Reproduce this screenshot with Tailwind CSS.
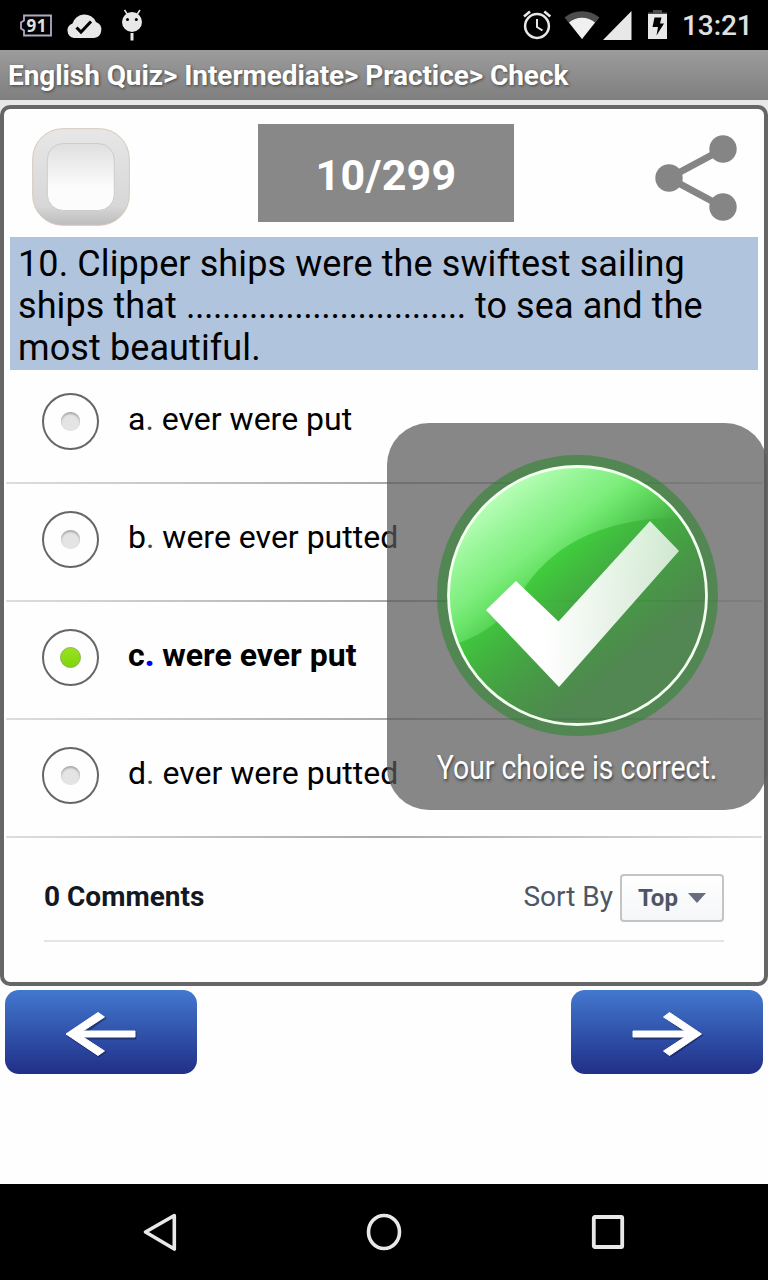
<!DOCTYPE html>
<html lang="en">
  <head>
    <meta charset="UTF-8" />
    <meta name="viewport" content="width=device-width, initial-scale=1.0" />
    <title>English Quiz</title>
    <script src="https://cdn.jsdelivr.net/npm/@tailwindcss/browser@4"></script>
  </head>
  <body class="font-['Roboto',sans-serif]">
    <div class="relative flex h-[1280px] w-[768px] flex-col overflow-hidden bg-[#fefefe]">
      <!-- Status bar -->
      <header class="flex h-[50px] shrink-0 items-center justify-between bg-black">
        <svg class="h-[50px] w-[160px]" viewBox="0 0 160 50">
          <path d="M24 15.500h27v20H24v-5l-3-2v-6l3-2z" fill="none" stroke="#b4a9c6" stroke-width="1.800" />
          <text x="26.500" y="31.800" font-size="17" font-weight="700" textLength="20" fill="#e0e0e0" font-family="Open Sans, sans-serif">91</text>
          <path d="M74 38a7.500 7.500 0 0 1-1.500-14.500a12.500 12.500 0 0 1 23.500-1.500a8.300 8.300 0 0 1-2 16z" fill="#e8e8e8" />
          <path d="M76.500 27.500l4.500 4.500l10-10.500" fill="none" stroke="#000" stroke-width="3" />
          <circle cx="132" cy="22" r="10" fill="#e8e8e8" />
          <path d="M124.500 10l3 4.500M140 10l-3 4.500" stroke="#e8e8e8" stroke-width="1.500" />
          <path d="M132 33v7.500" stroke="#e8e8e8" stroke-width="3" />
          <circle cx="127.500" cy="19.500" r="1.500" />
          <circle cx="136.300" cy="19.500" r="1.500" />
        </svg>
        <div class="flex items-center">
          <svg class="h-[50px] w-[168px]" viewBox="514 0 168 50">
            <g fill="none" stroke="#e8e8e8">
              <circle cx="537" cy="26" r="11.900" stroke-width="2.500" />
              <path d="M537 19v8l5.500 3.500" stroke-width="2" />
              <path d="M524 16.500l6-5M550.300 16.500l-6-5" stroke-width="2.600" />
            </g>
            <path d="M582 39L564.500 17.500a28 28 0 0 1 35 0z" fill="#4d4d4d" />
            <path d="M582 39L569 22.500a20 20 0 0 1 26 0z" fill="#f0f0f0" />
            <path d="M603 40H631.500V11z" fill="#e8e8e8" />
            <path d="M648 15V12.500h5V10h9v2.500h5V15z" fill="#4d4d4d" />
            <path d="M648 14h19v25h-19z" fill="#e8e8e8" />
            <path d="M654.500 17.500h7l-1.500 6h4l-7.500 12l1.500-8.500h-5.500z" fill="#000" />
          </svg>
          <span class="w-[86px] pt-0.5 text-[28px] leading-none font-medium tracking-[-0.1px] text-[#e0e0e0]">13:21</span>
        </div>
      </header>

      <h1 class="h-[50px] shrink-0 bg-linear-to-b from-[#9c9c9c] to-[#7f7f7f] pl-2 text-[28px] leading-[51px] font-bold tracking-[-0.08px] whitespace-nowrap text-white [text-shadow:1px_1px_3px_#444]">English Quiz&gt; Intermediate&gt; Practice&gt; Check</h1>

      <div class="shrink-0 bg-linear-to-b from-[#e7e7e7] to-[#fcfcfc] pt-[5px]">
        <main class="relative h-[881px] rounded-[10px] border-4 border-[#666] bg-[#fefefe]">
          <!-- Favourite toggle, counter, share -->
          <div class="flex h-32 items-start pt-[15px] pl-[28px]">
            <svg class="mt-[4px] h-[98px] w-[98px]" viewBox="0 0 98 98">
              <defs>
                <linearGradient id="frame" x2="0" y2="1"><stop stop-color="#e7e7e7" /><stop offset=".8" stop-color="#d7d7d7" /><stop offset="1" stop-color="#bcbcbc" /></linearGradient>
                <linearGradient id="well" x2="0" y2="1"><stop stop-color="#dfdfdf" /><stop offset=".65" stop-color="#fcfcfc" /></linearGradient>
              </defs>
              <rect x=".7" y=".7" width="96.600" height="96.600" rx="30" fill="url(#frame)" stroke="#d5c9b9" stroke-width="1" />
              <rect x="15.300" y="15.500" width="67" height="67" rx="16" fill="url(#well)" stroke="#ccc" stroke-width="1" />
            </svg>
            <div class="ml-32 h-[98px] w-64 bg-[#888] text-center text-[43px] leading-[102px] font-bold tracking-[0.3px] text-white">10/299</div>
            <svg class="ml-[138px] h-[98px] w-[92px]" viewBox="652 124 92 98">
              <path d="M723 149L669 178L723 207" fill="none" stroke="#858585" stroke-width="7" />
              <circle cx="723" cy="149" r="13.700" fill="#858585" />
              <circle cx="669" cy="178" r="13.700" fill="#858585" />
              <circle cx="723" cy="207" r="13.700" fill="#858585" />
            </svg>
          </div>

          <p class="mx-[6px] h-[133px] bg-[#b0c4de] pt-[6px] pl-2 text-[36px] leading-[42px] tracking-[0.1px] whitespace-nowrap text-black">10. Clipper ships were the swiftest sailing<br />ships that <span class="tracking-[-0.46px]">...............................</span> to sea and the<br />most beautiful.</p>

          <!-- Answers -->
          <ul class="-mt-1 mr-0.5 ml-0.5">
            <li class="h-[118px]">
              <div class="flex h-[116px] pt-[27px] pl-9">
                <div class="flex size-[57px] items-center justify-center rounded-full border-2 border-[#666]"><i class="size-[19px] rounded-[9px] bg-[#e4e4e4] shadow-[inset_0_2px_2px_#aaa]"></i></div>
                <span class="ml-[29px] text-[32px] leading-[52px] text-black">a<b class="font-normal text-[#444]">.</b> ever were put</span>
              </div>
              <div class="h-0.5 bg-linear-to-r from-[#ddd] via-[#aaa] to-[#ddd]"></div>
            </li>
            <li class="h-[118px]">
              <div class="flex h-[116px] pt-[27px] pl-9">
                <div class="flex size-[57px] items-center justify-center rounded-full border-2 border-[#666]"><i class="size-[19px] rounded-[9px] bg-[#e4e4e4] shadow-[inset_0_2px_2px_#aaa]"></i></div>
                <span class="ml-[29px] text-[32px] leading-[52px] text-black">b<b class="font-normal text-[#444]">.</b> were ever putted</span>
              </div>
              <div class="h-0.5 bg-linear-to-r from-[#ddd] via-[#aaa] to-[#ddd]"></div>
            </li>
            <li class="h-[118px]">
              <div class="flex h-[116px] pt-[27px] pl-9">
                <div class="flex size-[57px] items-center justify-center rounded-full border-2 border-[#666]"><i class="size-[21px] rounded-full border border-[#86b247] bg-linear-to-b from-[#9be11f] to-[#7fd60c]"></i></div>
                <span class="ml-[29px] text-[32px] leading-[52px] font-bold text-black">c<b class="text-[#00f]">.</b> were ever put</span>
              </div>
              <div class="h-0.5 bg-linear-to-r from-[#ddd] via-[#aaa] to-[#ddd]"></div>
            </li>
            <li class="h-[118px]">
              <div class="flex h-[116px] pt-[27px] pl-9">
                <div class="flex size-[57px] items-center justify-center rounded-full border-2 border-[#666]"><i class="size-[19px] rounded-[9px] bg-[#e4e4e4] shadow-[inset_0_2px_2px_#aaa]"></i></div>
                <span class="ml-[29px] text-[32px] leading-[52px] text-black">d<b class="font-normal text-[#444]">.</b> ever were putted</span>
              </div>
              <div class="h-0.5 bg-linear-to-r from-[#ddd] via-[#aaa] to-[#ddd]"></div>
            </li>
          </ul>

          <!-- Comments -->
          <div class="mx-10 mt-9 flex h-[68px] items-start border-b-2 border-[#e5e5e5] text-[28px]">
            <span class="leading-[46px] font-bold text-[#141823]">0 Comments</span>
            <span class="ml-auto leading-[46px] text-[#4e5665]">Sort By</span>
            <button class="ml-[7px] flex h-12 w-[104px] items-center rounded-[4px] border-2 border-[#c4c4c6] bg-linear-to-b from-white to-[#f5f6f8] pl-4 text-[24px] font-bold text-[#4e5665]">
              Top
              <svg class="ml-[10px] h-[10px] w-[18px]" viewBox="0 0 18 10"><path d="M0 0h18L9 10z" fill="#686d80" /></svg>
            </button>
          </div>
        </main>
      </div>

      <!-- Previous / next -->
      <div class="flex h-[198px] shrink-0 items-start justify-between px-[5px] pt-1">
        <button class="h-[84px] w-48 rounded-[14px] bg-linear-to-b from-[#4478cf] to-[#212f88]">
          <svg class="h-[84px] w-48" viewBox="0 0 192 84">
            <path d="M62 46L94 24L101 28L82 42H131V49H82L101 62L94 67L62 46z" fill="#182352" stroke="#182352" stroke-linejoin="round" opacity=".6" />
            <path d="M61 44L93 22.500L99.500 27L78 41H130V47H78L99.500 61L93 65.500z" fill="#fff" stroke="#fff" stroke-linejoin="round" />
          </svg>
        </button>
        <button class="h-[84px] w-48 rounded-[14px] bg-linear-to-b from-[#4478cf] to-[#212f88]">
          <svg class="h-[84px] w-48" viewBox="0 0 192 84">
            <path d="M132 45L100 24L94 28L113 42H63V49H113L94 63L100 67L132 45z" fill="#182352" stroke="#182352" stroke-linejoin="round" opacity=".6" />
            <path d="M130.500 44L98.500 22.500L92.500 27L114 41H62V47H114L92.500 61L98.500 65.500z" fill="#fff" stroke="#fff" stroke-linejoin="round" />
          </svg>
        </button>
      </div>

      <!-- Navigation bar -->
      <nav class="flex h-24 shrink-0 items-center justify-center gap-[176px] bg-black">
        <svg class="size-12" viewBox="0 0 48 48"><path d="M38.300 7.500L9.500 24L38.300 41z" fill="none" stroke="#e8e8e8" stroke-width="3.600" stroke-linejoin="round" /></svg>
        <svg class="size-12" viewBox="0 0 48 48"><ellipse cx="24" cy="24" rx="15.500" ry="16.500" fill="none" stroke="#e8e8e8" stroke-width="3.600" /></svg>
        <svg class="size-12" viewBox="0 0 48 48"><rect x="9.800" y="9" width="28.400" height="30" rx="1" fill="none" stroke="#e8e8e8" stroke-width="3.800" /></svg>
      </nav>

      <!-- Toast -->
      <div class="absolute top-[423px] left-[387px] flex h-[387px] w-[380px] flex-col items-center rounded-[42px] bg-[#595959]/72 pt-8">
        <svg class="h-[281px] w-[281px] shrink-0" viewBox="437 455 281 281">
          <defs>
            <linearGradient id="disc" gradientUnits="userSpaceOnUse" x1="500" y1="500" x2="655" y2="690">
              <stop offset=".3" stop-color="#40d23d" />
              <stop offset=".85" stop-color="#1d851d" stop-opacity=".5" />
            </linearGradient>
            <linearGradient id="gloss" gradientUnits="userSpaceOnUse" x1="490" y1="497" x2="572" y2="602">
              <stop stop-color="#baffba" />
              <stop offset=".5" stop-color="#93f793" stop-opacity=".75" />
              <stop offset="1" stop-color="#7de87d" stop-opacity="0" />
            </linearGradient>
            <linearGradient id="tick"><stop offset=".3" stop-color="#fff" /><stop offset="1" stop-color="#fff" stop-opacity=".75" /></linearGradient>
            <clipPath id="inside"><circle cx="577.500" cy="595.500" r="129" /></clipPath>
          </defs>
          <circle cx="577.500" cy="595.500" r="135" fill="none" stroke="#1d851d" stroke-opacity=".5" stroke-width="11" />
          <circle cx="577.500" cy="595.500" r="129" fill="url(#disc)" />
          <path d="M437 650V455H718V518C617 512 562 537 527 584C508 615 490 636 437 650z" fill="url(#gloss)" clip-path="url(#inside)" />
          <circle cx="577.500" cy="595.500" r="129" fill="none" stroke="#f2fff0" stroke-width="2.800" />
          <path d="M516 581L558.500 621.500L650 521L679 551L559 687L486 610z" fill="url(#tick)" />
        </svg>
        <span class="mt-[9px] origin-center scale-x-[0.86] text-[33px] leading-[46px] whitespace-nowrap text-white [text-shadow:1px_2px_3px_#444]">Your choice is correct.</span>
      </div>
    </div>
  </body>
</html>
